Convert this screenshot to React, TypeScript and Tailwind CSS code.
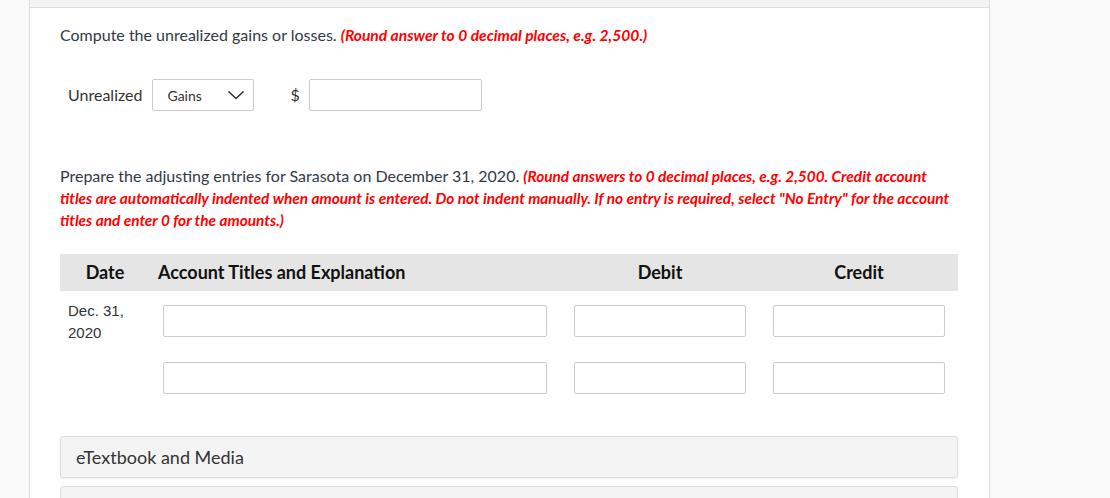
import React from 'react'

const font = { fontFamily: 'Lato, "Open Sans", sans-serif' }

function TextBox({ className = '' }: { className?: string }) {
  return (
    <input
      type="text"
      className={`h-[32px] rounded-[2px] border border-[#cccccc] bg-white outline-none ${className}`}
    />
  )
}

function JournalRow({ date }: { date?: string[] }) {
  return (
    <div className="grid h-[32px] grid-cols-[90px_410px_200px_198px]">
      <div className="-mt-[5px] pl-2 text-[15px] leading-[22px] text-[#333333] [font-family:'Liberation_Sans',Arial,sans-serif]">
        {date?.map((line) => (
          <div key={line}>{line}</div>
        ))}
      </div>
      <div className="pl-[13px] pr-[13px]">
        <TextBox className="w-full" />
      </div>
      <div className="pl-[14px] pr-[14px]">
        <TextBox className="w-full" />
      </div>
      <div className="pl-[13px] pr-[13px]">
        <TextBox className="w-full" />
      </div>
    </div>
  )
}

export default function App() {
  return (
    <div className="flex h-[498px] w-[1110px] overflow-hidden bg-[#f9f9f9]" style={font}>
      <div className="w-[30px] shrink-0 border-r border-[#dddddd]" />

      <div className="flex w-[960px] shrink-0 flex-col border-r border-[#dddddd] bg-white">
        <div className="h-[8px] shrink-0 border-b border-[#dddddd] bg-[#f4f4f4]" />

        <div className="shrink-0 pl-[30px] pr-[31px] text-[#2f3a45]">
          {/* Unrealized gains */}
          <p className="mt-[16px] whitespace-nowrap text-[16px] leading-[22px]">
            Compute the unrealized gains or losses.{' '}
            <span className="text-[15.6px] font-bold italic text-[#ff0000]">
              (Round answer to 0 decimal places, e.g. 2,500.)
            </span>
          </p>

          <div className="mt-[33px] flex items-center pl-[8px]">
            <span className="text-[16px] text-[#333333]">Unrealized</span>
            <div className="ml-[10px] flex h-[32px] w-[102px] items-center justify-between rounded-[2px] border border-[#cccccc] bg-white pl-[14px] pr-[8px]">
              <span className="text-[14px] text-[#333333]">Gains</span>
              <svg width="18" height="10" viewBox="0 0 18 10" fill="none">
                <polyline points="1.5,1.5 9,8.5 16.5,1.5" stroke="#333333" strokeWidth="1.6" />
              </svg>
            </div>
            <span className="ml-[36px] text-[16px] text-[#333333]">$</span>
            <TextBox className="ml-[9px] w-[173px]" />
          </div>

          {/* Adjusting entries */}
          <p className="mt-[54px] whitespace-nowrap text-[16px] leading-[22px]">
            Prepare the adjusting entries for Sarasota on December 31, 2020.{' '}
            <span className="text-[15.4px] font-bold italic text-[#ff0000]">
              (Round answers to 0 decimal places, e.g. 2,500. Credit account
              <br />
              titles are automatically indented when amount is entered. Do not indent manually. If
              no entry is required, select "No Entry" for the account
              <br />
              titles and enter 0 for the amounts.)
            </span>
          </p>

          <div className="mt-[23px]">
            <div className="grid h-[37px] grid-cols-[90px_410px_200px_198px] items-center bg-[#e5e5e5] text-[18px] font-bold text-[#111111]">
              <div className="text-center">Date</div>
              <div className="pl-2">Account Titles and Explanation</div>
              <div className="text-center">Debit</div>
              <div className="text-center">Credit</div>
            </div>
            <div className="mt-[14px] flex flex-col gap-[25px]">
              <JournalRow date={['Dec. 31,', '2020']} />
              <JournalRow />
            </div>
          </div>

          <div className="mt-[42px] flex h-[42px] items-center rounded-[3px] border border-[#dddddd] bg-[#f4f4f4] pl-[15px] text-[18px] text-[#333333] shadow-[0_1px_2px_rgba(0,0,0,0.08)]">
            eTextbook and Media
          </div>
          <div className="mt-[8px] h-[42px] rounded-[3px] border border-[#dddddd] bg-[#f4f4f4]" />
        </div>
      </div>
    </div>
  )
}
